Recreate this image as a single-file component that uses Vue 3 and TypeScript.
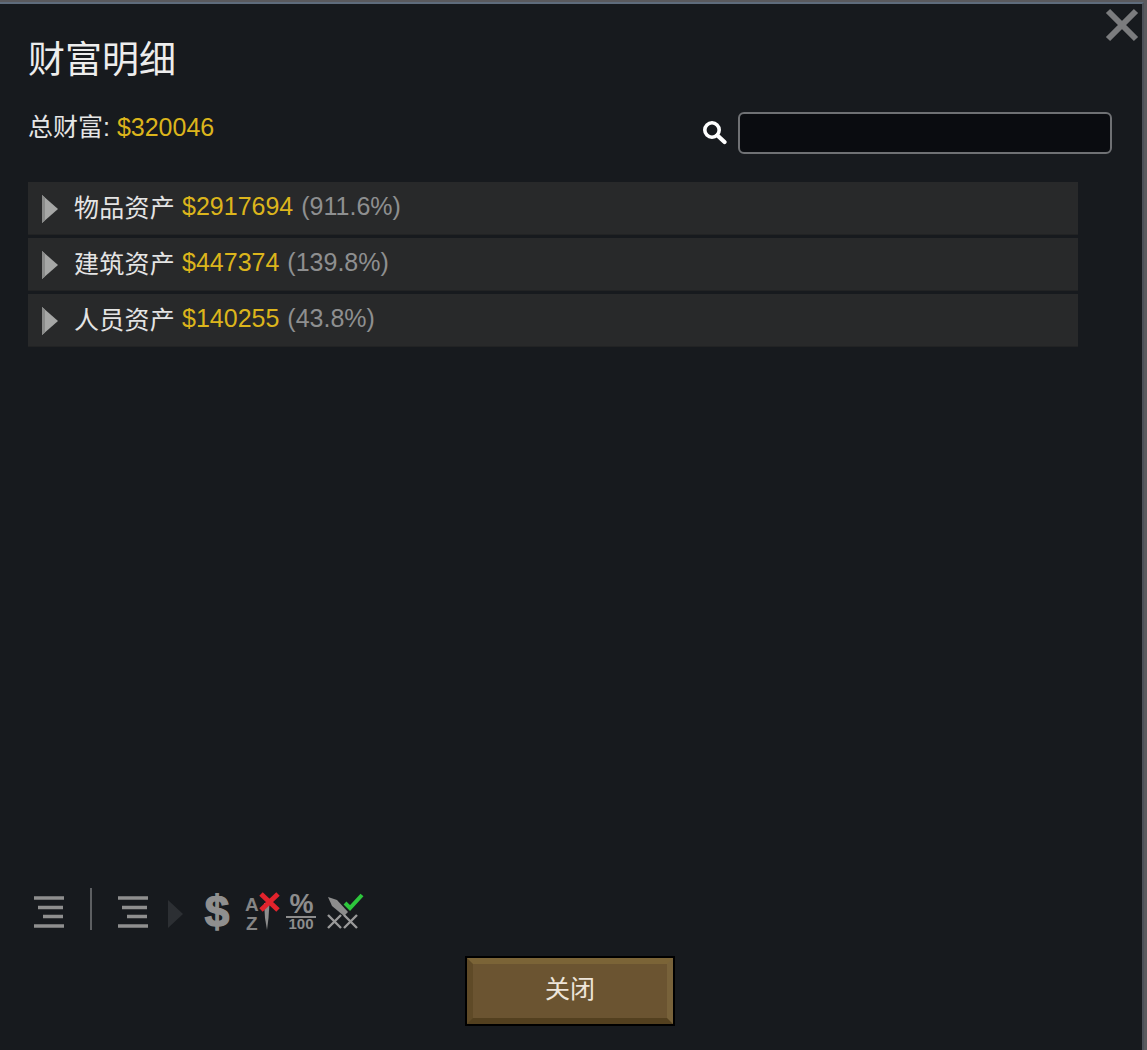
<script setup lang="ts">
interface Row { name: string; amount: string; pct: string }
const rows: Row[] = [
  { name: '物品资产', amount: '$2917694', pct: '(911.6%)' },
  { name: '建筑资产', amount: '$447374', pct: '(139.8%)' },
  { name: '人员资产', amount: '$140255', pct: '(43.8%)' },
]
</script>

<template>
  <div class="panel">
    <svg class="close" viewBox="0 0 34 34" width="34" height="34" aria-label="关闭">
      <path d="M3 3 L31 31 M31 3 L3 31" stroke="#7b7c7e" stroke-width="6" fill="none" />
    </svg>

    <h1 class="title">财富明细</h1>

    <div class="summary">
      <div class="total">总财富: <span class="gold">$320046</span></div>
      <div class="search">
        <svg viewBox="0 0 25 25" width="25" height="25">
          <circle cx="10" cy="10" r="7.2" fill="none" stroke="#fff" stroke-width="3.6" />
          <path d="M15.5 15.5 L22.5 22" stroke="#fff" stroke-width="4.2" stroke-linecap="round" />
        </svg>
        <div class="field"></div>
      </div>
    </div>

    <div class="list">
      <div v-for="r in rows" :key="r.name" class="row">
        <svg class="arrow" viewBox="0 0 16 28" width="16" height="28">
          <path d="M0 0 L16 14 L0 28 Z" fill="#a6a7a6" />
          <path d="M0 0 L3 2.6 L3 25.4 L0 28 Z" fill="#8a8b8a" />
        </svg>
        <span class="name">{{ r.name }}</span>
        <span class="gold">{{ r.amount }}</span>
        <span class="pct">{{ r.pct }}</span>
      </div>
    </div>

    <div class="toolbar">
      <svg class="lines" viewBox="0 0 30 32" width="30" height="32">
        <path d="M0 2H30M4 11.5H29M9 20.5H29M0 30H30" stroke="#8f8f8f" stroke-width="3.6" />
      </svg>
      <div class="divider"></div>
      <svg class="lines second" viewBox="0 0 30 32" width="30" height="32">
        <path d="M0 2H30M4 11.5H29M9 20.5H29M0 30H30" stroke="#8f8f8f" stroke-width="3.6" />
      </svg>
      <svg class="step" viewBox="0 0 15 28" width="15" height="28">
        <path d="M0 0 L15 14 L0 28 Z" fill="#2c2f33" />
      </svg>
      <svg class="ic dollar" viewBox="0 0 28 52" width="28" height="52">
        <text x="14" y="42" class="t-dollar" text-anchor="middle">$</text>
      </svg>
      <svg class="ic az" viewBox="0 0 35 46" width="35" height="46">
        <text x="0" y="23" class="t-az">A</text>
        <text x="1" y="42" class="t-az">Z</text>
        <path d="M19 15 L24.5 15 L23.5 30 L22 42 L20 30 Z" fill="#8d8d8d" />
        <path d="M16 6 L33 22 M33 6 L16 22" stroke="#e2232c" stroke-width="5" />
      </svg>
      <svg class="ic pc" viewBox="0 0 31 46" width="31" height="46">
        <text x="15.5" y="25" class="t-pc" text-anchor="middle">%</text>
        <path d="M0 29H30" stroke="#8d8d8d" stroke-width="2" />
        <text x="15" y="41" class="t-100" text-anchor="middle">100</text>
      </svg>
      <svg class="ic sw" viewBox="0 0 37 46" width="37" height="46">
        <path d="M1 9 L10 12 L21 24 L17 28 L5 18 Z" fill="#8d8d8d" />
        <path d="M1 27 L14 40 M14 27 L1 40 M17 27 L30 40 M30 27 L17 40" stroke="#9a9a9a" stroke-width="2.4" fill="none" />
        <path d="M18 15 L23 20 L35 7" stroke="#2dc63c" stroke-width="4" fill="none" />
      </svg>
    </div>

    <div class="footer">
      <div class="btn">关闭</div>
    </div>
  </div>
</template>

<style>
html, body {
  margin: 0;
  background: #5a5a5e;
}
</style>

<style scoped>
.panel {
  position: relative;
  box-sizing: border-box;
  width: 1144px;
  height: 1048px;
  margin-top: 2px;
  padding: 0 0 0 28px;
  display: flex;
  flex-direction: column;
  background: #171a1e;
  border-top: 2px solid #5f6c7c;
  border-right: 2px solid #4d5058;
  color: #e6e6e6;
  font-family: "Liberation Sans", "Noto Sans CJK SC", sans-serif;
  font-size: 25px;
  overflow: hidden;
}
.close {
  position: absolute;
  top: 4px;
  right: 3px;
}
.title {
  margin: 35px 0 0;
  font-size: 37px;
  line-height: 44px;
  font-weight: 400;
  color: #ededed;
}
.summary {
  margin-top: 29px;
  height: 42px;
  display: flex;
  justify-content: space-between;
  width: 1084px;
}
.total {
  line-height: 30px;
}
.gold {
  color: #dcb51c;
}
.search {
  display: flex;
  align-items: center;
  gap: 11px;
}
.search svg {
  margin-top: -1px;
}
.field {
  box-sizing: border-box;
  width: 374px;
  height: 42px;
  background: #0a0c10;
  border: 2px solid #6f7174;
  border-radius: 6px;
}
.list {
  margin-top: 28px;
  width: 1050px;
  display: flex;
  flex-direction: column;
  gap: 3px;
}
.row {
  box-sizing: border-box;
  height: 53px;
  padding: 0 0 4px 14px;
  display: flex;
  align-items: center;
  background: #28292a;
  border-bottom: 1px solid #222324;
}
.arrow {
  margin: 5px 16px 0 0;
}
.name {
  margin-right: 7px;
  letter-spacing: 0.25px;
  color: #e4e4e4;
}
.pct {
  margin-left: 8px;
  color: #8e8f90;
}
.toolbar {
  margin-top: auto;
  margin-left: 6px;
  height: 42px;
  display: flex;
  align-items: flex-start;
}
.lines {
  margin-top: 8px;
}
.divider {
  width: 2px;
  height: 42px;
  margin-left: 26px;
  background: #5d5f62;
}
.second {
  margin-left: 26px;
}
.step {
  margin: 12px 0 0 20px;
}
.ic {
  flex: none;
}
.dollar {
  margin: -3px 0 0 20px;
}
.az {
  margin-left: 14px;
}
.pc {
  margin-left: 6px;
}
.sw {
  margin-left: 10px;
}
.t-dollar {
  font: 700 44px "Liberation Sans", sans-serif;
  fill: #8f8f8f;
  stroke: #8f8f8f;
  stroke-width: 1.4px;
}
.t-az {
  font: 700 19px "Liberation Sans", sans-serif;
  fill: #858585;
}
.t-pc {
  font: 700 27px "Liberation Sans", sans-serif;
  fill: #8d8d8d;
}
.t-100 {
  font: 700 15px "Liberation Sans", sans-serif;
  fill: #8d8d8d;
}
.footer {
  margin: 26px 0 24px -28px;
  padding-left: 465px;
}
.btn {
  box-sizing: border-box;
  width: 210px;
  height: 70px;
  outline: 2px solid #000;
  outline-offset: -2px;
  padding: 0 0 8px;
  background: #6b5431;
  display: flex;
  align-items: center;
  justify-content: center;
  color: #eee5da;
  border-style: solid;
  border-width: 8px;
  border-color: #7b6437 #78623a #53401f #5f4a27;
}
</style>
